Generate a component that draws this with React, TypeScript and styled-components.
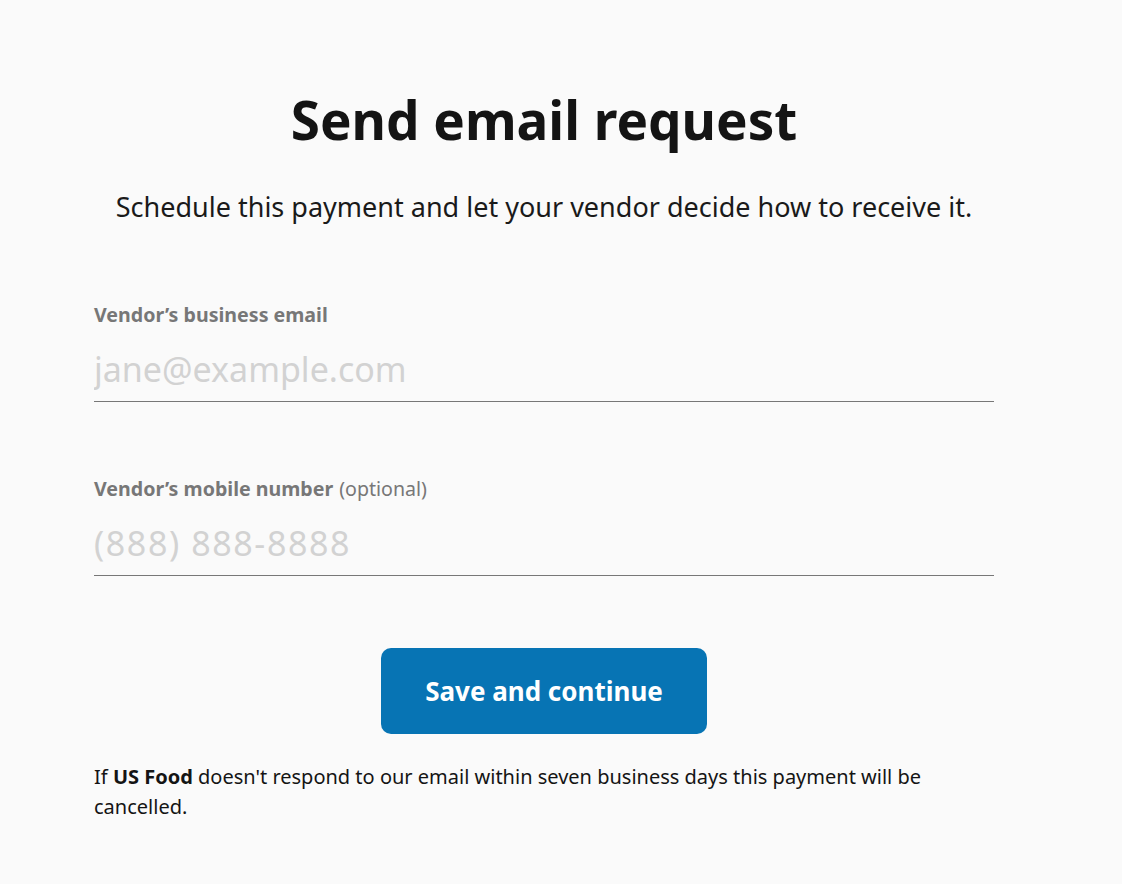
import React from "react";
import styled, { createGlobalStyle } from "styled-components";

const Global = createGlobalStyle`
  html, body { margin: 0; padding: 0; background: #fafafa; }
  body { font-family: "Noto Sans", "Open Sans", sans-serif; color: #141414; }
  * { box-sizing: border-box; }
`;

const Page = styled.main`
  width: 900px;
  margin-left: 94px;
  padding-top: 84px;
  display: flex;
  flex-direction: column;
`;

const Title = styled.h1`
  margin: 0;
  text-align: center;
  font-size: 53px;
  line-height: 72px;
  font-weight: 700;
  color: #141414;
`;

const Subtitle = styled.p`
  margin: 33px 0 0;
  text-align: center;
  font-size: 27px;
  line-height: 36px;
  color: #1a1a1a;
`;

const Form = styled.form`
  margin-top: 77px;
  display: flex;
  flex-direction: column;
  gap: 74px;
`;

const Field = styled.label`
  display: flex;
  flex-direction: column;
`;

const LabelText = styled.span`
  font-size: 19.6px;
  line-height: 26px;
  font-weight: 700;
  color: #777;
`;

const Optional = styled.span`
  font-weight: 400;
  margin-left: 6px;
`;

const Input = styled.input<{ $spacing?: number }>`
  margin-top: 18px;
  border: none;
  border-bottom: 1px solid #777;
  background: transparent;
  padding: 0 0 9px;
  font-family: inherit;
  font-size: 34px;
  line-height: 46px;
  letter-spacing: ${(p) => p.$spacing ?? 0}px;
  color: #141414;
  outline: none;
  &::placeholder { color: #d2d2d2; }
`;

const Actions = styled.div`
  display: flex;
  justify-content: center;
  margin-top: 72px;
`;

const Button = styled.button`
  width: 326px;
  height: 86px;
  border: none;
  border-radius: 10px;
  background: #0774b4;
  color: #fff;
  font-family: inherit;
  font-size: 26px;
  font-weight: 700;
  cursor: pointer;
`;

const Note = styled.p`
  margin: 28px 0 0;
  font-size: 20px;
  line-height: 30px;
  color: #141414;
`;

const Strong = styled.strong`
  font-weight: 700;
`;

export default function App() {
  return (
    <>
      <Global />
      <Page>
        <Title>Send email request</Title>
        <Subtitle>Schedule this payment and let your vendor decide how to receive it.</Subtitle>
        <Form onSubmit={(e) => e.preventDefault()}>
          <Field>
            <LabelText>Vendor’s business email</LabelText>
            <Input type="email" placeholder="jane@example.com" />
          </Field>
          <Field>
            <LabelText>
              Vendor’s mobile number<Optional>(optional)</Optional>
            </LabelText>
            <Input type="tel" $spacing={1.6} placeholder="(888) 888-8888" />
          </Field>
        </Form>
        <Actions>
          <Button type="button">Save and continue</Button>
        </Actions>
        <Note>
          If <Strong>US Food</Strong> doesn't respond to our email within seven business days this payment will be cancelled.
        </Note>
      </Page>
    </>
  );
}
